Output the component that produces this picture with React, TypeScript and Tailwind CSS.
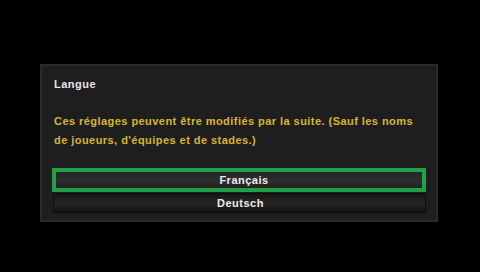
export default function App() {
  return (
    <div className="h-[272px] w-[480px] bg-black pt-[64px] pl-[40px] font-['Liberation_Sans',Arial,sans-serif] font-bold">
      <div className="w-[398px] h-[158px] border-2 border-[#2a2a2a] bg-[#1e1e1e] px-[10px]">
        <div className="mt-[8px] pl-[2px] text-[11px] leading-[20px] tracking-[0.5px] text-[#e6e6e6]">Langue</div>
        <p className="mt-[18px] pl-[2px] text-[11px] leading-[19px] tracking-[0.45px] text-[#d9b52c]">
          Ces réglages peuvent être modifiés par la suite. (Sauf les noms de joueurs, d'équipes et de stades.)
        </p>
        <div className="mt-[18px] flex flex-col">
          <div className="border-4 border-[#22a046] h-[24px]">
            <div className="h-full bg-gradient-to-b from-[#242424] via-[#2e2e2e] to-[#222222] flex items-center justify-center pl-[10px] text-[11px] tracking-[0.5px] text-[#ececec]">
              Français
            </div>
          </div>
          <div className="mt-[1px] ml-[1px] h-[20px] border border-[#0e0e0e] bg-gradient-to-b from-[#161616] via-[#262626] to-[#121212] flex items-center justify-center pl-[2px] text-[11px] tracking-[0.5px] text-[#ececec]">
            Deutsch
          </div>
        </div>
      </div>
    </div>
  );
}
